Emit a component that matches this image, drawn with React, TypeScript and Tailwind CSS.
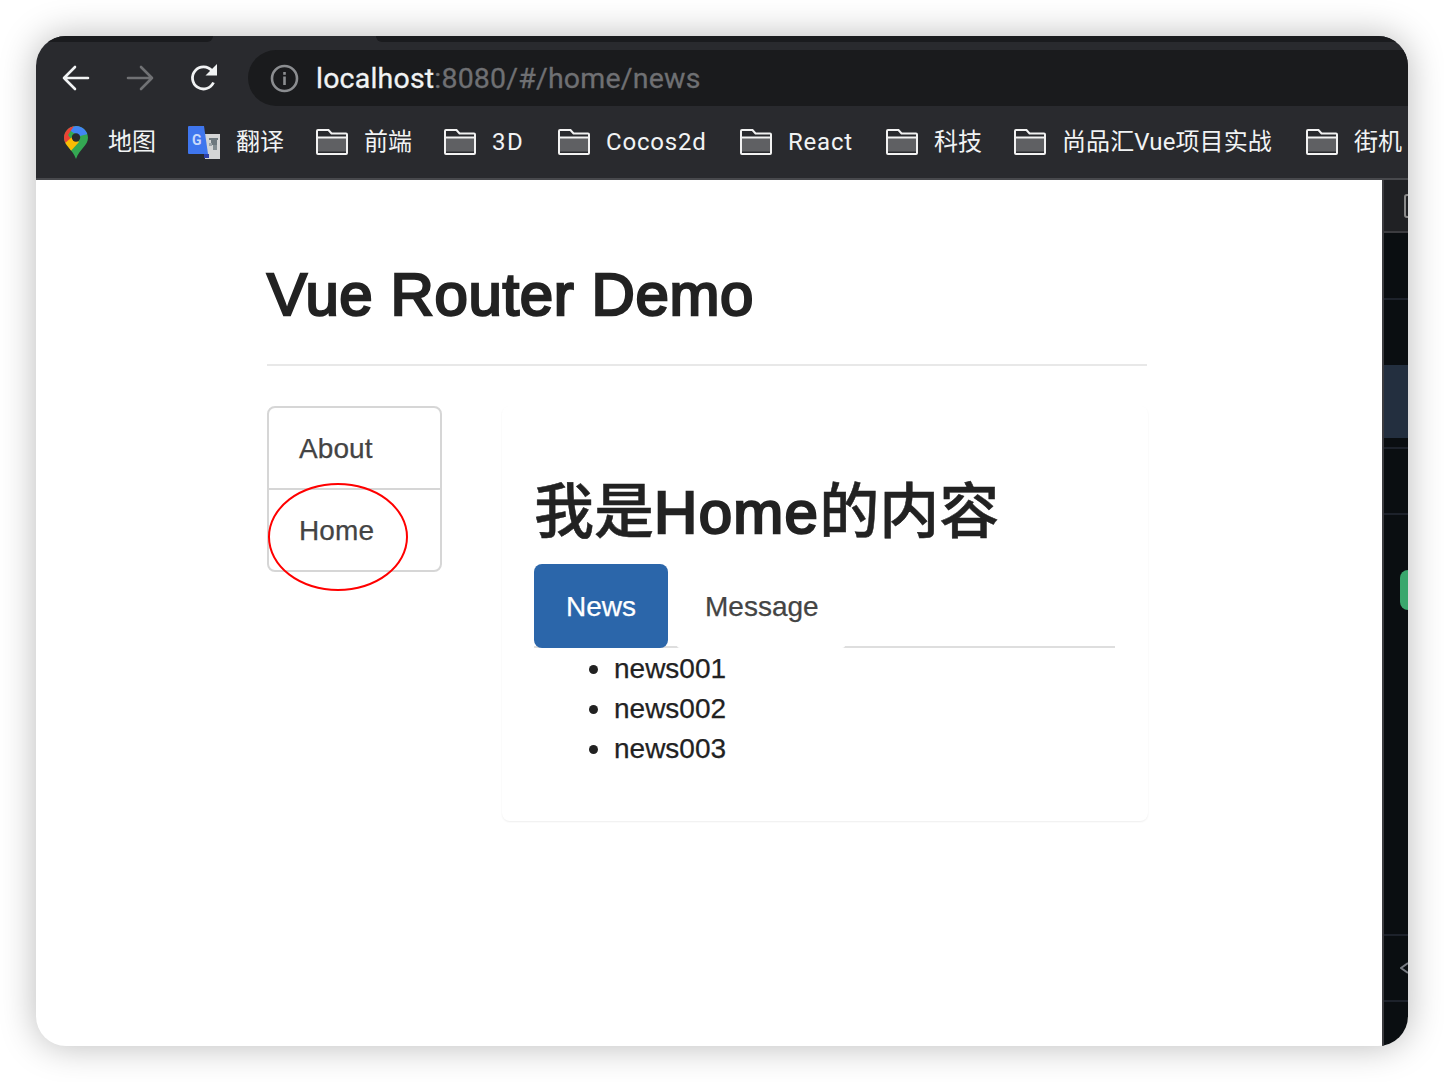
const bookmarks = [
  { label: "前端", width: "w-[48px]", gap: "mr-[32px]", track: "tracking-normal" },
  { label: "3D", width: "w-[32px]", gap: "mr-[34px]", track: "tracking-[1.5px]" },
  { label: "Cocos2d", width: "w-[100px]", gap: "mr-[34px]", track: "tracking-[0.8px]" },
  { label: "React", width: "w-[64px]", gap: "mr-[34px]", track: "tracking-[0.8px]" },
  { label: "科技", width: "w-[48px]", gap: "mr-[32px]", track: "tracking-normal" },
  { label: "尚品汇Vue项目实战", width: "w-[210px]", gap: "mr-[34px]", track: "tracking-[0.1px]" },
  { label: "街机", width: "w-[48px]", gap: "", track: "tracking-normal" },
];

function Folder() {
  return (
    <svg width="32" height="26" viewBox="0 0 32 26" className="shrink-0 mr-[16px]" fill="none">
      <rect x="2" y="9" width="28" height="13.5" fill="#5f6063" />
      <path d="M1 8.5h30M2 1h10.5l3 3.5H30a1 1 0 0 1 1 1V24a1 1 0 0 1-1 1H2a1 1 0 0 1-1-1V2a1 1 0 0 1 1-1Z" stroke="#f2f2f2" strokeWidth="2" />
    </svg>
  );
}

function MapsIcon() {
  return (
    <svg width="24" height="33" viewBox="0 0 24 33" className="shrink-0 mr-[20px]">
      <defs>
        <clipPath id="pin">
          <path d="M12 0C5.4 0 0 5.2 0 11.8 0 19.5 8.5 23 12 33c3.5-10 12-13.5 12-21.2C24 5.2 18.6 0 12 0Z" />
        </clipPath>
      </defs>
      <g clipPath="url(#pin)">
        <rect width="24" height="33" fill="#34a853" />
        <polygon points="4,2 12,0 24,0 24,8 16,10 8,6" fill="#4285f4" />
        <polygon points="0,0 10,0 4,9 7,13 0,18" fill="#ea4335" />
        <polygon points="0,18 8,11 15,16 5,27" fill="#fbbc04" />
      </g>
      <circle cx="12" cy="11.5" r="4.2" fill="#292a2e" />
    </svg>
  );
}

function TranslateIcon() {
  return (
    <svg width="32" height="33" viewBox="0 0 32 33" className="shrink-0 mr-[16px]">
      <rect x="17" y="8" width="15" height="25" fill="#d4d5d6" />
      <rect x="21" y="12" width="9" height="2" fill="#6f7a80" />
      <rect x="23" y="14" width="6" height="5" fill="#6d787e" />
      <rect x="25" y="19" width="4" height="5" fill="#838d92" />
      <rect x="21" y="17" width="3" height="3" fill="#9aa2a6" />
      <path d="M1 0h15l4 28H1a1 1 0 0 1-1-1V1a1 1 0 0 1 1-1Z" fill="#3f76ee" />
      <rect x="16" y="28" width="5" height="4" fill="#2e3fa8" />
      <text x="4" y="19" fontSize="14" fontWeight="700" fontFamily="Roboto, sans-serif" fill="#c9d9fb">G</text>
    </svg>
  );
}

export default function App() {
  return (
    <div className="w-[1444px] h-[1082px] bg-white pt-[36px] pl-[36px] font-['Liberation_Sans','Noto_Sans_CJK_SC',sans-serif] overflow-hidden">
      <div className="w-[1372px] h-[1010px] rounded-[30px] overflow-hidden bg-white flex flex-col shadow-[0_0_36px_rgba(0,0,0,0.28)]">
        <div className="h-[144px] shrink-0 bg-[#292a2e] flex flex-col border-b-2 border-[#48494d]">
          <div className="h-[6px] flex shrink-0">
            <div className="w-[177px] bg-[#1a1b1e] rounded-br-[6px]" />
            <div className="w-[163px]" />
            <div className="flex-1 bg-[#1a1b1e] rounded-bl-[6px]" />
          </div>
          <div className="h-[56px] mt-[8px] flex items-center shrink-0">
            <svg width="28" height="26" viewBox="0 0 28 26" className="ml-[26px]" fill="none" stroke="#f1f3f4" strokeWidth="2.6" strokeLinecap="round" strokeLinejoin="round">
              <path d="M26 13H2M13 2 2 13l11 11" />
            </svg>
            <svg width="28" height="26" viewBox="0 0 28 26" className="ml-[36px]" fill="none" stroke="#707174" strokeWidth="2.6" strokeLinecap="round" strokeLinejoin="round">
              <path d="M2 13h24M15 2l11 11-11 11" />
            </svg>
            <svg width="28" height="28" viewBox="0 0 28 28" className="ml-[36px]" fill="none">
              <path d="M23.5 18.5a11 11 0 1 1-1.5-11.5" stroke="#f1f3f4" strokeWidth="2.8" />
              <path d="M27 0v11.5H15.5Z" fill="#f1f3f4" />
            </svg>
            <div className="ml-[30px] flex-1 h-[56px] bg-[#1a1b1d] rounded-l-[28px] flex items-center pl-[22px]">
              <svg width="29" height="29" viewBox="0 0 29 29" fill="none" className="shrink-0">
                <circle cx="14.5" cy="14.5" r="12.5" stroke="#8b8d90" strokeWidth="2.6" />
                <rect x="13.2" y="12.5" width="2.6" height="8.5" fill="#8b8d90" />
                <rect x="13.2" y="8" width="2.6" height="2.8" fill="#8b8d90" />
              </svg>
              <div className="ml-[17px] mt-[2px] text-[28.5px] font-['Roboto',sans-serif] tracking-[0.2px] text-[#6f7073] leading-none [-webkit-text-stroke:0.3px]">
                <span className="text-[#f1f3f4]">localhost</span>:8080/#/home/news
              </div>
            </div>
          </div>
          <div className="flex items-center pl-[28px] h-[72px] whitespace-nowrap text-[24px] text-[#f1f3f4] font-['Roboto','Noto_Sans_CJK_SC',sans-serif]">
            <MapsIcon />
            <span className="w-[48px] mr-[32px]">地图</span>
            <TranslateIcon />
            <span className="w-[48px] mr-[32px]">翻译</span>
            {bookmarks.map((b) => (
              <div key={b.label} className={`flex items-center shrink-0 ${b.gap}`}>
                <Folder />
                <span className={`${b.width} ${b.track}`}>{b.label}</span>
              </div>
            ))}
          </div>
        </div>

        <div className="flex-1 flex min-h-0">
          <main className="w-[1346px] shrink-0 pl-[231px] pt-[85px] text-[#444]">
            <div className="w-[880px] border-b-2 border-[#e8e8e8] pb-[39px]">
              <h1 className="text-[60px] leading-[60px] text-[#222] tracking-[0.6px] [-webkit-text-stroke:2.4px_#222]">Vue Router Demo</h1>
            </div>
            <div className="mt-[40px] flex gap-[60px] items-start">
              <div className="relative w-[175px] border-2 border-[#d6d6d6] rounded-[8px] text-[28px] [-webkit-text-stroke:0.25px]">
                <div className="h-[82px] box-border flex items-center pl-[30px] pt-[1px] border-b-2 border-[#d6d6d6] tracking-[0.1px]">About</div>
                <div className="h-[80px] box-border flex items-center pl-[30px] pt-[2px] tracking-[0.1px]">Home</div>
                <div className="absolute left-[-1px] top-[75px] w-[140px] h-[108px] rounded-[50%] border-2 border-[#f00]" />
              </div>
              <div className="w-[646px] rounded-[8px] shadow-[0_1px_2px_rgba(0,0,0,0.07)] pt-[77px] pb-[53px] pl-[32px] pr-[33px]">
                <h2 className="text-[60px] leading-[60px] text-[#222] font-medium [-webkit-text-stroke:0.5px_#222]">
                  我是<span className="tracking-[1.3px] [-webkit-text-stroke:2.4px_#222]">Home</span>的内容
                </h2>
                <div className="mt-[21px] flex border-b-2 border-[#dedede] h-[84px] text-[28px] [-webkit-text-stroke:0.25px]">
                  <div className="w-[134px] h-[84px] shrink-0 bg-[#2b66aa] rounded-[8px] text-white flex items-center justify-center pt-[2px] relative z-10">News</div>
                  <div className="ml-[9px] w-[168px] h-[84px] shrink-0 bg-white border-b-2 border-white rounded-b-[3px] flex items-center pl-[28px] pt-[4px]">Message</div>
                </div>
                <ul className="list-disc pl-[80px] text-[28px] leading-[40px] text-[#222] [-webkit-text-stroke:0.25px] marker:text-[31px]">
                  <li className="h-[40px]">news001</li>
                  <li className="h-[40px]">news002</li>
                  <li className="h-[40px]">news003</li>
                </ul>
              </div>
            </div>
          </main>
          <aside className="flex-1 flex flex-col bg-[#0a0e11] border-l-2 border-[#3c3c40] min-w-0">
            <div className="h-[53px] bg-[#202124] border-b-2 border-[#3c3c40] flex items-center pl-[20px] shrink-0">
              <div className="w-[12px] h-[24px] border-2 border-[#8a8a8a] rounded-[3px] shrink-0" />
            </div>
            <div className="h-[67px] border-b-2 border-[#1d222b] shrink-0" />
            <div className="h-[65px] shrink-0" />
            <div className="h-[73px] bg-[#232f3f] shrink-0" />
            <div className="h-[11px] border-b-2 border-[#1d222b] shrink-0" />
            <div className="h-[66px] border-b-2 border-[#1d222b] shrink-0" />
            <div className="h-[421px] border-b-2 border-[#1d222b] pt-[55px] pl-[16px] shrink-0">
              <div className="w-[16px] h-[40px] bg-[#3aa76d] rounded-l-[8px]" />
            </div>
            <div className="h-[66px] border-b-2 border-[#1d222b] flex items-center pl-[16px] shrink-0">
              <svg width="8" height="12" viewBox="0 0 8 12" fill="none" stroke="#777b82" strokeWidth="2"><path d="M8 1 1 6l7 5" /></svg>
            </div>
          </aside>
        </div>
      </div>
    </div>
  );
}
